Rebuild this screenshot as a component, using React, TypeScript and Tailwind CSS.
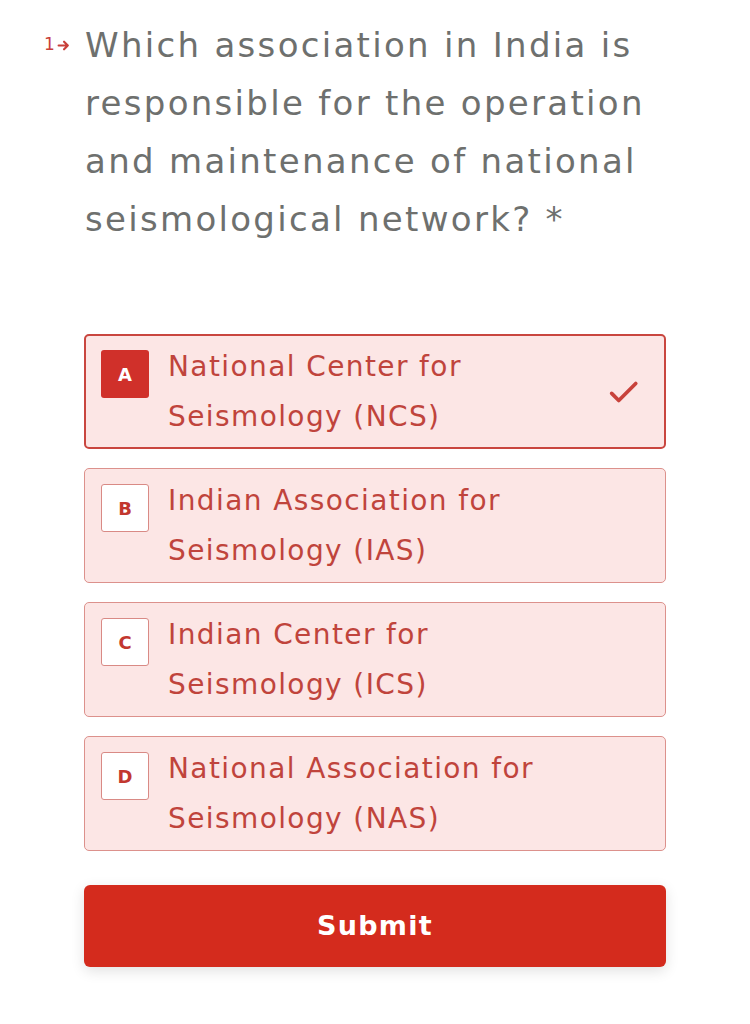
import { useState } from "react";

const options = [
  { key: "A", lines: ["National Center for", "Seismology (NCS)"] },
  { key: "B", lines: ["Indian Association for", "Seismology (IAS)"] },
  { key: "C", lines: ["Indian Center for", "Seismology (ICS)"] },
  { key: "D", lines: ["National Association for", "Seismology (NAS)"] },
];

const Option = ({
  letter,
  lines,
  selected,
  onSelect,
}: {
  letter: string;
  lines: string[];
  selected: boolean;
  onSelect: () => void;
}) => (
  <button
    type="button"
    onClick={onSelect}
    className={
      selected
        ? "flex items-start w-full h-[115px] pl-[15px] pr-[24px] pt-[14px] rounded-[5px] border-2 border-[#c9463f] bg-[#fce6e5] text-left"
        : "flex items-start w-full h-[115px] pl-[16px] pr-[24px] pt-[15px] rounded-[5px] border border-[#dc918c] bg-[#fce6e5] text-left"
    }
  >
    <span
      className={
        selected
          ? "flex shrink-0 justify-center items-center w-[48px] h-[48px] rounded-[3px] bg-[#d0302a] text-white text-[18px] font-bold"
          : "flex shrink-0 justify-center items-center w-[48px] h-[48px] rounded-[3px] border border-[#d98a85] bg-white text-[#c2372f] text-[18px] font-bold"
      }
    >
      {letter}
    </span>
    <span className="flex-1 ml-[19px] -mt-[8px] text-[28px] leading-[50px] tracking-[1.4px] text-[#c0443c]">
      {lines.map((l) => (
        <span key={l} className="block whitespace-nowrap">
          {l}
        </span>
      ))}
    </span>
    {selected && (
      <svg
        className="self-center -mt-[14px] w-[34px] h-[34px] text-[#c8423b]"
        viewBox="0 0 24 24"
        fill="none"
        stroke="currentColor"
        strokeWidth="2.6"
        strokeLinecap="round"
        strokeLinejoin="round"
      >
        <path d="M4 13l5 5L21 6" />
      </svg>
    )}
  </button>
);

const question = [
  "Which association in India is",
  "responsible for the operation",
  "and maintenance of national",
  "seismological network? *",
];

export default function App() {
  const [selected, setSelected] = useState("A");

  return (
    <div
      className="w-[750px] h-[1024px] bg-white"
      style={{ fontFamily: "'DejaVu Sans', 'Open Sans', sans-serif" }}
    >
      <div className="flex pt-[16px] pl-[44px]">
        <div className="flex items-center shrink-0 gap-[2px] w-[41px] h-[58px] text-[17px] text-[#c9403a]">
          1
          <svg
            className="w-[13px] h-[13px]"
            viewBox="0 0 12 12"
            fill="none"
            stroke="currentColor"
            strokeWidth="2"
            strokeLinecap="round"
            strokeLinejoin="round"
          >
            <path d="M1.5 6h8.5M6.5 2.5L10 6l-3.5 3.5" />
          </svg>
        </div>
        <h1 className="text-[34px] leading-[58px] tracking-[2.3px] text-[#6e706e]">
          {question.map((l) => (
            <span key={l} className="block whitespace-nowrap">
              {l}
            </span>
          ))}
        </h1>
      </div>

      <div className="flex flex-col gap-[19px] mt-[86px] ml-[84px] w-[582px]">
        {options.map((o) => (
          <Option
            key={o.key}
            letter={o.key}
            lines={o.lines}
            selected={selected === o.key}
            onSelect={() => setSelected(o.key)}
          />
        ))}
      </div>

      <div className="mt-[34px] ml-[84px] w-[582px]">
        <button
          type="button"
          className="w-full h-[82px] rounded-[6px] bg-[#d42b1d] text-white text-[27px] font-bold tracking-[1.3px] shadow-[0_4px_14px_rgba(0,0,0,0.12)]"
        >
          Submit
        </button>
      </div>
    </div>
  );
}
